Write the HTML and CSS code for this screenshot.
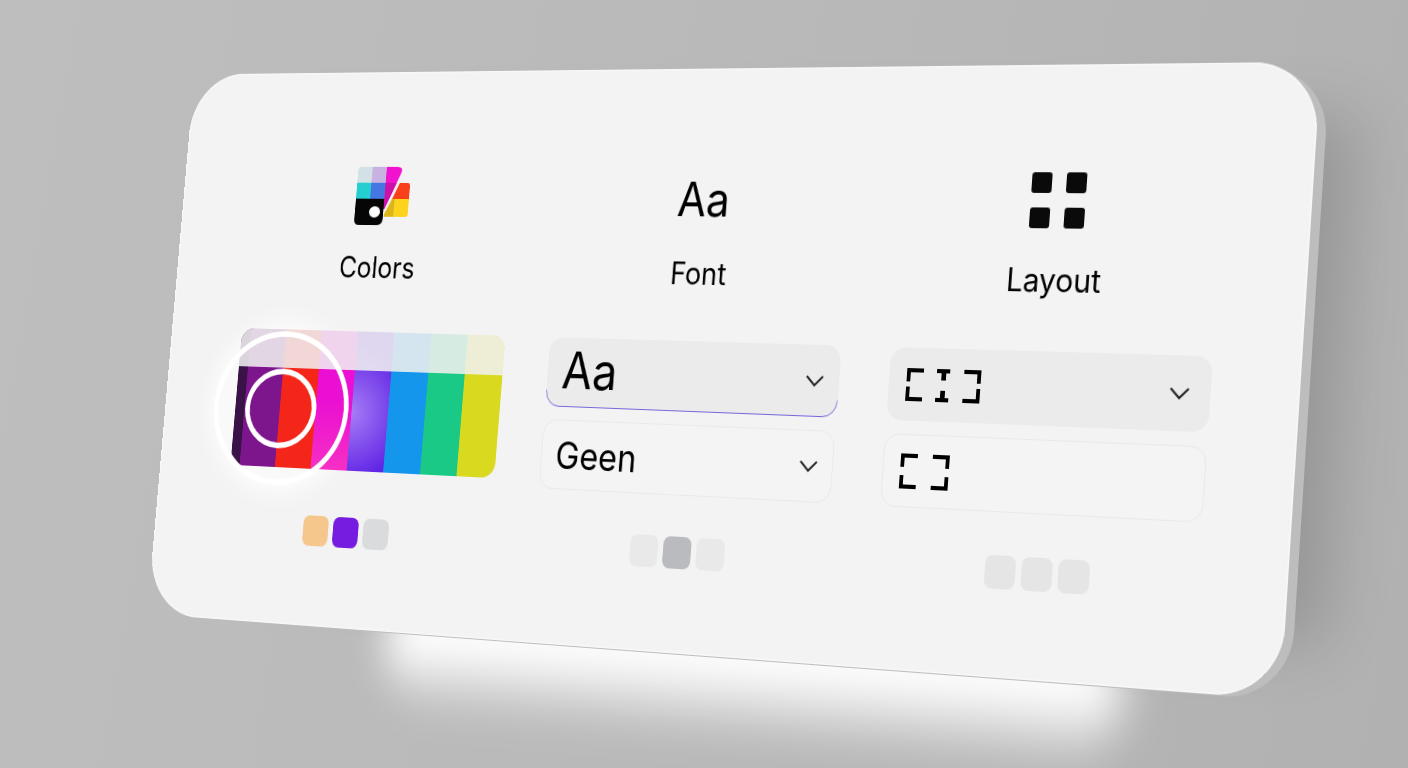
FILE: index.html
```html
<!DOCTYPE html>
<html lang="en">
<head>
    <meta charset="UTF-8">
    <meta name="viewport" content="width=device-width, initial-scale=1.0">
    <title>Colors, Font, Layout</title>
    <link rel="stylesheet" href="styles.css">
</head>
<body>
    <main class="scene">
        <div class="glow"></div>
        <div class="card">
            <section class="column colors">
                <div class="icon">
                    <svg width="68" height="62" viewBox="0 0 68 62" aria-hidden="true">
                        <path d="M5 0H18V17H0V5Q0 0 5 0Z" fill="#d3e0e6"/>
                        <path d="M18 0H36V17H18Z" fill="#c8b2e2"/>
                        <path d="M0 17H18V34H0Z" fill="#25cfd0"/>
                        <path d="M18 17H36V34H18Z" fill="#4676e4"/>
                        <path d="M0 34H36V55Q36 62 29 62H6Q0 62 0 56Z" fill="#060606"/>
                        <ellipse cx="25" cy="48" rx="7" ry="6" fill="#fff"/>
                        <path d="M36 0H50Q57 0 55 6L37 45H36Z" fill="#f012cf"/>
                        <path d="M36 17H50L37 45H36Z" fill="#cf10a8"/>
                        <path d="M54 17H64Q67 17 67 20V34H46Z" fill="#f8401b"/>
                        <path d="M46 34H67V50Q67 53 64 53H37V51Z" fill="#fdd31d"/>
                        <path d="M46 34H49V53H37V51Z" fill="#dcb51a"/>
                    </svg>
                </div>
                <h2>Colors</h2>
                <div class="panel">
                    <div class="palette">
                        <div class="stripes">
                            <span class="stripe plum"></span>
                            <span class="stripe purple"></span>
                            <span class="stripe red"></span>
                            <span class="stripe magenta"></span>
                            <span class="stripe violet"></span>
                            <span class="stripe blue"></span>
                            <span class="stripe green"></span>
                            <span class="stripe yellow"></span>
                        </div>
                        <div class="ring ring-outer"></div>
                        <div class="ring ring-inner"></div>
                    </div>
                </div>
                <div class="dots">
                    <span class="dot orange"></span>
                    <span class="dot violet-dot"></span>
                    <span class="dot grey"></span>
                </div>
            </section>

            <section class="column font">
                <div class="icon">Aa</div>
                <h2><label for="font" id="font-label">Font</label></h2>
                <div class="panel">
                    <div class="field filled active">
                        <select id="font" class="big">
                            <option>Aa</option>
                        </select>
                        <svg class="chevron" width="20" height="12" viewBox="0 0 20 12" aria-hidden="true"><path d="M1 1L10 10L19 1"/></svg>
                    </div>
                    <div class="field">
                        <select id="effect" aria-labelledby="font-label">
                            <option>Geen</option>
                        </select>
                        <svg class="chevron" width="20" height="12" viewBox="0 0 20 12" aria-hidden="true"><path d="M1 1L10 10L19 1"/></svg>
                    </div>
                </div>
                <div class="dots">
                    <span class="dot light"></span>
                    <span class="dot dark"></span>
                    <span class="dot light"></span>
                </div>
            </section>

            <section class="column layout">
                <div class="icon">
                    <svg width="58" height="56" viewBox="0 0 58 56" fill="#0a0a0a" aria-hidden="true">
                        <rect x="0" y="0" width="21" height="20" rx="3"/>
                        <rect x="36" y="0" width="21" height="20" rx="3"/>
                        <rect x="0" y="34" width="21" height="20" rx="3"/>
                        <rect x="36" y="34" width="21" height="20" rx="3"/>
                    </svg>
                </div>
                <h2 id="layout-label">Layout</h2>
                <div class="panel">
                    <button type="button" class="field filled" aria-labelledby="layout-label" aria-haspopup="listbox">
                        <svg width="80" height="32" viewBox="0 0 80 32" fill="#000" aria-hidden="true">
                            <path d="M0 0H18V4H4V13H0Z"/>
                            <path d="M0 18H4V28H18V32H0Z"/>
                            <path d="M32 0H46V4H42V11H37V4H32Z"/>
                            <path d="M37 21H42V28H46V32H32V28H37Z"/>
                            <path d="M61 0H79V13H75V4H61Z"/>
                            <path d="M75 18H79V32H61V28H75Z"/>
                        </svg>
                        <svg class="chevron" width="20" height="12" viewBox="0 0 20 12" aria-hidden="true"><path d="M1 1L10 10L19 1"/></svg>
                    </button>
                    <button type="button" class="field" aria-labelledby="layout-label">
                        <svg width="52" height="34" viewBox="0 0 52 34" fill="#000" aria-hidden="true">
                            <path d="M0 0H18V4H4V13H0Z"/>
                            <path d="M0 21H4V30H18V34H0Z"/>
                            <path d="M34 0H52V13H48V4H34Z"/>
                            <path d="M48 21H52V34H34V30H48Z"/>
                        </svg>
                    </button>
                </div>
                <div class="dots">
                    <span class="dot soft"></span>
                    <span class="dot soft"></span>
                    <span class="dot soft"></span>
                </div>
            </section>
        </div>
    </main>
</body>
</html>
```
FILE: styles.css
```css
* {
    box-sizing: border-box;
}

body {
    margin: 0;
    min-height: 100vh;
    padding: 65px 75px 65px 45px;
    overflow: hidden;
    font-family: Inter, "Liberation Sans", sans-serif;
    color: #000;
    background: linear-gradient(100deg, #bebebe, #b9b9b9 50%, #b1b1b1);
}

/* the whole card is tilted in 3D */
.scene {
    position: relative;
    transform: perspective(3800px) rotateX(7deg) rotateY(-29deg) rotateZ(5deg);
}

.glow {
    position: absolute;
    left: 24%;
    right: 12%;
    bottom: -80px;
    height: 140px;
    border-radius: 70px;
    background: linear-gradient(#fff 50%, rgba(255, 255, 255, 0));
    filter: blur(22px);
}

.card {
    position: relative;
    display: grid;
    grid-template-columns: repeat(3, 1fr);
    gap: 54px;
    padding: 100px 87px 84px 93px;
    border-radius: 66px;
    background-color: #f3f3f3;
    box-shadow:
        inset 0 0 2px 1px #fafafa,
        11px 3px 0 -2px #bdbdbd,
        90px 0 60px -50px rgba(0, 0, 0, 0.16);
}

.column {
    display: flex;
    flex-direction: column;
    align-items: center;
}

.icon {
    display: flex;
    align-items: center;
    justify-content: center;
    height: 64px;
    font-size: 48px;
}

h2 {
    margin: 24px 0 48px;
    font-size: 31px;
    font-weight: 400;
    line-height: 40px;
}

.panel {
    display: flex;
    flex-direction: column;
    gap: 13px;
    width: 100%;
    height: 155px;
}

/* Palette */
.palette {
    position: relative;
    height: 147px;
}

.palette::before {
    content: "";
    position: absolute;
    left: -24px;
    top: 1px;
    width: 168px;
    height: 164px;
    border-radius: 50%;
    background-color: #f9f9f9;
    box-shadow: 0 0 30px 6px #fff;
}

.stripes {
    position: relative;
    display: flex;
    height: 100%;
    border-radius: 16px;
    overflow: hidden;
    clip-path: polygon(0 0, 100% 0, 100% 100%, 12px 100%, 0 92%);
}

.stripes::after {
    content: "";
    position: absolute;
    inset: 0 0 auto 0;
    height: 41px;
    background-color: rgba(240, 240, 240, 0.88);
}

.stripe {
    flex: 1;
}

.plum {
    flex: 0 0 12px;
    background-color: #3b1248;
}

.purple { background-color: #7d168c; }
.red { background-color: #f4261a; }
.magenta { background: linear-gradient(#ea0fd2 50%, #f62fc4); }
.violet { background: radial-gradient(circle at 0 58%, #a77cf6, #5f24e4 75%); }
.blue { background-color: #1496ec; }
.green { background-color: #19c985; }
.yellow { background-color: #d9d91f; }

.ring {
    position: absolute;
    border: 6px solid #fff;
    border-radius: 50%;
}

.ring-outer {
    left: -28px;
    top: 2px;
    width: 174px;
    height: 164px;
}

.ring-inner {
    left: 13px;
    top: 42px;
    width: 92px;
    height: 85px;
}

/* Fields */
.field {
    position: relative;
    display: flex;
    align-items: center;
    justify-content: space-between;
    width: 100%;
    height: 71px;
    padding: 0 16px;
    border: 1px solid #e9e9e9;
    border-radius: 16px;
    background-color: #f4f4f4;
}

button.field {
    padding: 0 20px 0 18px;
}

.filled,
button.filled {
    border-color: #ebebeb;
    background-color: #ebebeb;
}

.active::after {
    content: "";
    position: absolute;
    inset: -1px;
    border: 1px solid #7468dc;
    border-radius: 16px;
    clip-path: inset(54px 0 0 0);
    pointer-events: none;
}

select {
    flex: 1;
    height: 68px;
    padding: 0;
    border: 0;
    outline: 0;
    appearance: none;
    background: transparent;
    color: #000;
    font-family: inherit;
    font-size: 38px;
}

.big {
    padding-bottom: 6px;
    font-size: 52px;
}

.chevron {
    fill: none;
    stroke: #222;
    stroke-width: 2;
}

/* Swatches */
.dots {
    display: flex;
    gap: 6px;
    margin-top: 41px;
}

.colors .dots {
    margin-right: 24px;
}

.layout .dots {
    margin-left: 8px;
}

.dot {
    width: 32px;
    height: 32px;
    border-radius: 8px;
}

.orange { background-color: #f6c78c; }
.violet-dot { background-color: #761be0; }
.grey { background-color: #dadbdc; }
.light { background-color: #e9e9e9; }
.dark { background-color: #b9bbbe; }
.soft { background-color: #e5e5e5; }
```
